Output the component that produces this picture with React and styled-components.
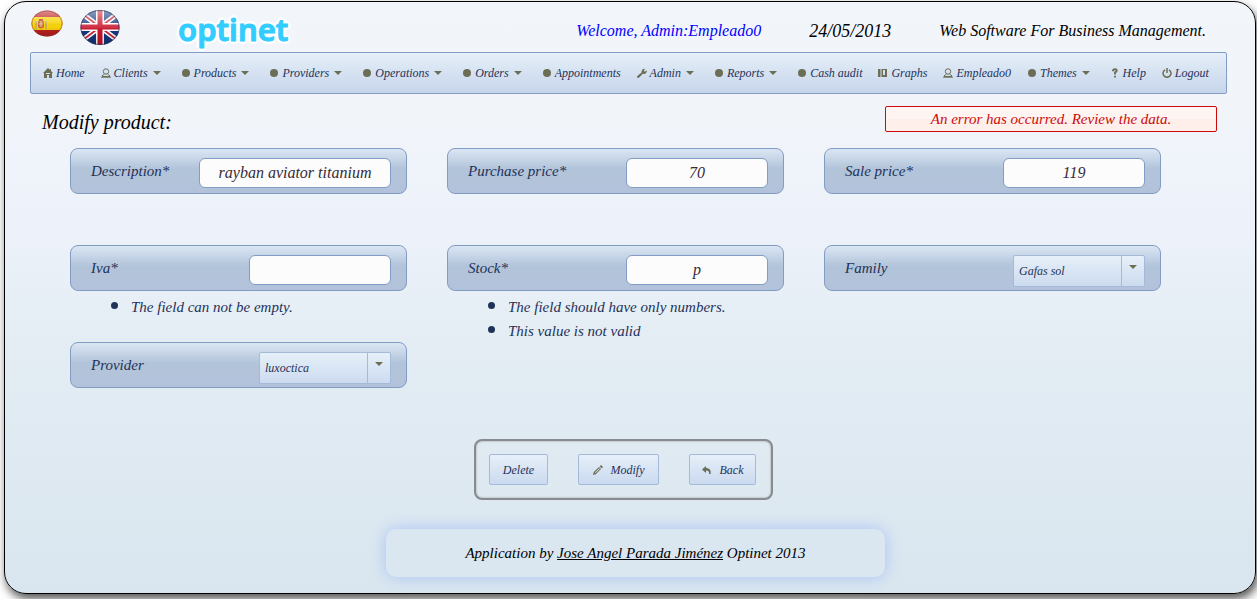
import React from "react";
import styled, { createGlobalStyle } from "styled-components";

const Global = createGlobalStyle`
  *, *::before, *::after { box-sizing: border-box; }
  body {
    margin: 0;
    background: #fff;
    overflow-x: hidden;
    font-family: "Liberation Serif", serif;
    font-style: italic;
    font-size: 15px;
    line-height: 24px;
    color: #000;
  }
  input, select, button { font: inherit; color: inherit; }
`;

const Frame = styled.div`
  margin: 1px 1px 5px 4px;
  padding: 0 28px 16px 26px;
  padding-left: 25px;
  border: 1px solid #000;
  border-radius: 22px;
  background: linear-gradient(#f2f5fa 0%, #f1f5fa 20%, #ecf1fa 40%, #e4edf4 57%, #d9e6ef 100%);
  box-shadow: 2px 5px 10px #555;
`;

const Header = styled.header`
  display: flex;
  height: 50px;
  padding-left: 1px;
`;

const Flag = styled.a`
  display: block;
  height: 40px;
  margin-top: 7px;
  margin-right: ${(p) => p.$gap};
`;

const Logo = styled.a`
  margin-top: 7px;
  font: normal 600 31px/40px "Noto Sans", sans-serif;
  color: #33ccff;
  text-decoration: none;
  -webkit-text-stroke: 1px #33ccff;
  text-shadow: 0 -3px #fff, 3px 0 #fff, 0 3px #fff, -3px 0 #fff, 2px 2px #fff, -2px 2px #fff, 2px -2px #fff, -2px -2px #fff;
`;

const HeaderInfo = styled.div`
  display: flex;
  gap: 48px;
  margin: 17px 21px 0 auto;
  font-size: 16px;
  white-space: nowrap;
`;

const Welcome = styled.span`
  color: #0000ff;
`;

const Today = styled.time`
  font-size: 18px;
`;

const MenuBar = styled.nav`
  display: flex;
  justify-content: space-between;
  align-items: center;
  height: 42px;
  padding: 0 17px 0 12px;
  border: 1px solid #829cc4;
  border-radius: 2px;
  background: linear-gradient(#e6eff9, #c6d5ea);
`;

const MenuItem = styled.a`
  display: flex;
  align-items: center;
  gap: 3px;
  margin-right: ${(p) => (p.$sub ? "4px" : "0")};
  font-size: 12px;
  line-height: 20px;
  color: #1f3258;
  text-decoration: none;
  white-space: nowrap;
  svg { flex: none; }
  span + svg { margin-left: 2px; }
`;

const TitleRow = styled.div`
  display: flex;
  justify-content: space-between;
  align-items: flex-start;
  padding: 12px 10px 0 12px;
  height: 54px;
`;

const Title = styled.h1`
  margin: 0;
  padding-top: 2px;
  font-size: 20px;
  font-weight: 400;
  line-height: 28px;
`;

const ErrorBox = styled.div`
  width: 332px;
  height: 26px;
  border: 1px solid #cd0a0a;
  border-radius: 2px;
  background: linear-gradient(#fef5f3 50%, #feefeb 50%);
  color: #cd0a0a;
  text-align: center;
`;

const Form = styled.form`
  display: flex;
  flex-direction: column;
  align-items: center;
`;

const Fields = styled.div`
  align-self: stretch;
  display: grid;
  grid-template-columns: repeat(auto-fill, 337px);
  grid-auto-rows: 97px;
  column-gap: 40px;
  padding-left: 40px;
`;

const Panel = styled.div`
  display: flex;
  justify-content: space-between;
  height: 46px;
  padding: 0 15px 0 20px;
  border: 1px solid #829cc4;
  border-radius: 8px;
  background: linear-gradient(#dbe6f4 0, #b2c4da 20px, #b2c2da 100%);
  color: #1f3258;
`;

const Label = styled.label`
  padding-top: 10px;
`;

const TextBox = styled.input`
  width: ${(p) => (p.$wide ? "192px" : "142px")};
  height: 30px;
  margin-top: 9px;
  padding: 0;
  border: 1px solid #829cc4;
  border-radius: 6px;
  background: #fcfcfc;
  color: #362b36;
  font-size: 16px;
  text-align: center;
`;

const SelectWrap = styled.div`
  position: relative;
  width: 132px;
  height: 32px;
  margin-top: 9px;
`;

const Select = styled.select`
  appearance: none;
  width: 100%;
  height: 100%;
  padding: 0 28px 0 5px;
  border: 1px solid #a3bad9;
  border-radius: 2px;
  background: linear-gradient(90deg, transparent 107px, #a3bad9 107px, #a3bad9 108px, transparent 108px),
    linear-gradient(#e6f0f9, #cddbf0);
  font-size: 12px;
`;

const SelectArrow = styled.svg`
  position: absolute;
  top: 10px;
  right: 8px;
  pointer-events: none;
`;

const Messages = styled.ul`
  margin: 2px 0 0;
  padding-left: 61px;
  color: #1f3258;
  li { height: 24px; }
  li::marker { font-size: 22px; }
`;

const Actions = styled.div`
  display: flex;
  gap: 30px;
  margin-right: 10px;
  padding: 13px 15px 13px 13px;
  border: 2px solid #888b90;
  border-radius: 8px;
  box-shadow: inset 0 0 2px #888;
`;

const Button = styled.button`
  display: flex;
  align-items: center;
  justify-content: center;
  gap: 8px;
  width: ${(p) => p.$width};
  height: 31px;
  padding: 0;
  border: 1px solid #a3bad9;
  border-radius: 2px;
  background: linear-gradient(#e6eff9, #cbdaef);
  color: #1f3258;
  font-size: 12px;
`;

const Footer = styled.footer`
  width: 499px;
  height: 48px;
  margin: 29px auto 0 356px;
  border-radius: 10px;
  background: #dae6f0;
  box-shadow: 0 0 16px #a9c2f5;
  line-height: 48px;
  text-align: center;
  a { color: inherit; }
`;

const ink = "#6b6e54";

const shapes = {
  dot: <circle cx="5" cy="5" r="4" fill={ink} />,
  home: <path d="M5 0 0 5h1v5h3V7h2v3h3V5h1L8 3V1H7v1ZM3 5h4v1H3Z" fill={ink} fillRule="evenodd" />,
  person: (
    <g fill="none" stroke={ink}>
      <circle cx="5" cy="3.5" r="2.7" />
      <path d="M3.5 6 1 8M6.5 6 9 8M0 9.2h10" />
      <path d="M1 8.5h8" />
    </g>
  ),
  wrench: <path d="M0 8.2 4.6 4.4C4.3 2 6 .4 8.2.8L6.8 2.6l1 1.1L10 2.3C10 5 8 6.4 5.8 5.8L2 9.8.2 9.7Z" fill={ink} />,
  graph: <path d="M0 1h2v8H0ZM2.500 1h1v8h-1ZM4 1h5v8H4ZM5 2v5h2V2Z" fill={ink} fillRule="evenodd" />,
  help: <path d="M3 3.2V2.5Q3.3 1.2 5 1.2t1.8 1.4Q6.8 4 5 4.4V6.4M5 7.8v1.8" fill="none" stroke={ink} strokeWidth="1.9" />,
  power: <path d="M3 1.8a4 4 0 1 0 4 0M5 0v5" fill="none" stroke={ink} strokeWidth="1.5" />,
  pencil: <path d="m0 10 .8-3L6 2l2 2-5.2 5.2ZM6.7 1.4 8 0l2 2-1.3 1.3ZM2 7.5l.6.6L6.8 4 6.2 3.3Z" fill={ink} fillRule="evenodd" />,
  back: <path d="M4 1v2c3 0 5.5 2 4.5 6H7C7.6 7 6.5 5.500 4 5.500V8L0 4.500Z" fill={ink} />,
};

const Icon = ({ name }) => (
  <svg width="10" height="10" viewBox="0 0 10 10" aria-hidden="true">{shapes[name]}</svg>
);

const Caret = () => (
  <svg width="8" height="4" viewBox="0 0 8 4" aria-hidden="true"><path d="M0 0h8L4 4Z" fill={ink} /></svg>
);

const SpainFlag = () => (
  <svg width="32" height="28" viewBox="0 0 32 28" role="img" aria-label="Español">
    <defs>
      <clipPath id="es"><ellipse cx="16" cy="14.5" rx="15.5" ry="13" /></clipPath>
      <linearGradient id="gloss" x2="0" y2="1">
        <stop stopColor="#fff" stopOpacity=".55" />
        <stop offset=".5" stopColor="#fff" stopOpacity=".12" />
        <stop offset=".6" stopColor="#000" stopOpacity="0" />
        <stop offset="1" stopColor="#000" stopOpacity=".18" />
      </linearGradient>
    </defs>
    <g clipPath="url(#es)">
      <path d="M0 0h32v28H0Z" fill="#bd2022" />
      <path d="M0 8h32v13H0Z" fill="#f8d50b" />
      <path d="M7 12h6v6q-3 3-6 0Z" fill="#cf6a3c" />
      <path d="M8 10h4v2H8Z" fill="#b74728" />
      <path d="M5 12v8M15 12v8" stroke="#c5a477" strokeWidth="1.5" />
      <path d="M8 15h4M10 12v6" stroke="#e8d6a2" />
      <path d="M0 0h32v28H0Z" fill="url(#gloss)" />
    </g>
    <ellipse cx="16" cy="14.5" rx="15" ry="12.5" fill="none" stroke="#8d2c24" strokeOpacity=".4" />
  </svg>
);

const UkFlag = () => (
  <svg width="40" height="37" viewBox="0 0 40 37" role="img" aria-label="English">
    <defs><clipPath id="uk"><ellipse cx="20" cy="18.5" rx="19.5" ry="17.5" /></clipPath></defs>
    <g clipPath="url(#uk)">
      <path d="M0 0h40v37H0Z" fill="#15367c" />
      <path d="m0 3 40 30M40 3 0 33" stroke="#fff" strokeWidth="5" />
      <path d="m0 3 40 30M40 3 0 33" stroke="#c8202f" strokeWidth="1.8" />
      <path d="M20 0v37M0 18h40" stroke="#fff" strokeWidth="8" />
      <path d="M20 0v37M0 18h40" stroke="#c8142a" strokeWidth="5" />
      <path d="M0 0h40v37H0Z" fill="url(#gloss)" />
    </g>
    <ellipse cx="20" cy="18.5" rx="19" ry="17" fill="none" stroke="#26345c" strokeOpacity=".6" />
  </svg>
);

const menu = [
  ["home", "Home"],
  ["person", "Clients", true],
  ["dot", "Products", true],
  ["dot", "Providers", true],
  ["dot", "Operations", true],
  ["dot", "Orders", true],
  ["dot", "Appointments"],
  ["wrench", "Admin", true],
  ["dot", "Reports", true],
  ["dot", "Cash audit"],
  ["graph", "Graphs"],
  ["person", "Empleado0"],
  ["dot", "Themes", true],
  ["help", "Help"],
  ["power", "Logout"],
];

const fields = [
  { id: "description", label: "Description*", value: "rayban aviator titanium", wide: true },
  { id: "purchase", label: "Purchase price*", value: "70" },
  { id: "sale", label: "Sale price*", value: "119" },
  { id: "iva", label: "Iva*", value: "", errors: ["The field can not be empty."] },
  { id: "stock", label: "Stock*", value: "p", errors: ["The field should have only numbers.", "This value is not valid"] },
  { id: "family", label: "Family", option: "Gafas sol" },
  { id: "provider", label: "Provider", option: "luxoctica" },
];

const Field = ({ id, label, value, option, wide, errors }) => (
  <div>
    <Panel>
      <Label htmlFor={id}>{label}</Label>
      {option ? (
        <SelectWrap>
          <Select id={id}><option>{option}</option></Select>
          <SelectArrow width="8" height="4" viewBox="0 0 8 4" aria-hidden="true"><path d="M0 0h8L4 4Z" fill={ink} /></SelectArrow>
        </SelectWrap>
      ) : (
        <TextBox id={id} type="text" defaultValue={value} $wide={wide} />
      )}
    </Panel>
    {errors && <Messages>{errors.map((e) => <li key={e}>{e}</li>)}</Messages>}
  </div>
);

export default function App() {
  return (
    <>
      <Global />
      <Frame>
        <Header>
          <Flag href="#es" $gap="17px"><SpainFlag /></Flag>
          <Flag href="#en" $gap="58px"><UkFlag /></Flag>
          <Logo href="#home">optinet</Logo>
          <HeaderInfo>
            <Welcome>Welcome, Admin:Empleado0</Welcome>
            <Today dateTime="2013-05-24">24/05/2013</Today>
            <span>Web Software For Business Management.</span>
          </HeaderInfo>
        </Header>
        <MenuBar>
          {menu.map(([icon, text, sub]) => (
            <MenuItem key={text} href="#menu" $sub={sub}>
              <Icon name={icon} />
              <span>{text}</span>
              {sub && <Caret />}
            </MenuItem>
          ))}
        </MenuBar>
        <TitleRow>
          <Title>Modify product:</Title>
          <ErrorBox role="alert">An error has occurred. Review the data.</ErrorBox>
        </TitleRow>
        <Form>
          <Fields>{fields.map((f) => <Field key={f.id} {...f} />)}</Fields>
          <Actions>
            <Button type="button" $width="59px">Delete</Button>
            <Button type="button" $width="81px"><Icon name="pencil" />Modify</Button>
            <Button type="button" $width="67px"><Icon name="back" />Back</Button>
          </Actions>
        </Form>
        <Footer>
          Application by <a href="#author">Jose Angel Parada Jiménez</a> Optinet 2013
        </Footer>
      </Frame>
    </>
  );
}
